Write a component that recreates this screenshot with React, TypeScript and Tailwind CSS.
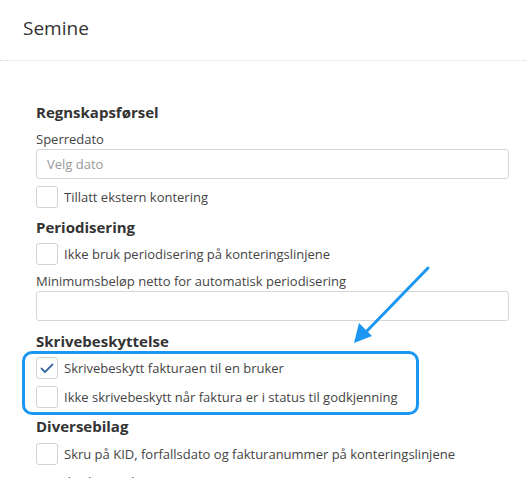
import React from 'react';

const font = { fontFamily: '"Open Sans", "Noto Sans", sans-serif' };

const Checkbox = ({ checked = false }: { checked?: boolean }) => (
  <span className="w-[22px] h-[22px] shrink-0 border border-[#d2d2d2] rounded-[3px] bg-white flex items-center justify-center">
    {checked && (
      <svg width="14" height="11" viewBox="0 0 14 11" fill="none">
        <path d="M1.5 5.5 L5 9 L12.5 1.5" stroke="#3d6aa3" strokeWidth="1.8" strokeLinecap="round" strokeLinejoin="round" />
      </svg>
    )}
  </span>
);

const CheckRow = ({ label, checked, className = '' }: { label: string; checked?: boolean; className?: string }) => (
  <label className={`flex items-center gap-[6px] h-[22px] ${className}`}>
    <Checkbox checked={checked} />
    <span className="text-[13px] leading-[18px] text-[#444]">{label}</span>
  </label>
);

const Heading = ({ children, className = '' }: { children: React.ReactNode; className?: string }) => (
  <h3 className={`text-[15px] leading-[20px] font-bold text-[#333] ${className}`}>{children}</h3>
);

const FieldLabel = ({ children, className = '' }: { children: React.ReactNode; className?: string }) => (
  <div className={`text-[13px] leading-[18px] text-[#444] ${className}`}>{children}</div>
);

const TextInput = ({ placeholder = '', className = '' }: { placeholder?: string; className?: string }) => (
  <input
    placeholder={placeholder}
    className={`block w-full h-[30px] border border-[#d6d6d6] rounded-[3px] px-[10px] text-[13px] text-[#444] placeholder:text-[#999] outline-none ${className}`}
    style={font}
  />
);

const App: React.FC = () => {
  return (
    <div className="relative w-[526px] h-[478px] overflow-hidden bg-white" style={font}>
      {/* Header */}
      <div className="h-[61px] pt-[16px] pl-[23px] border-b border-dotted border-[#d8d8d8]">
        <h2 className="text-[19px] leading-[24px] text-[#333]">Semine</h2>
      </div>

      <div className="pl-[36px] pr-[17px] pt-[41px]">
        <Heading>Regnskapsførsel</Heading>
        <FieldLabel className="mt-[8px]">Sperredato</FieldLabel>
        <TextInput placeholder="Velg dato" className="mt-[1px]" />
        <CheckRow label="Tillatt ekstern kontering" className="mt-[7px]" />

        <Heading className="mt-[9px]">Periodisering</Heading>
        <CheckRow label="Ikke bruk periodisering på konteringslinjene" className="mt-[6px]" />
        <FieldLabel className="mt-[7px]">Minimumsbeløp netto for automatisk periodisering</FieldLabel>
        <TextInput className="mt-[1px]" />

        <Heading className="mt-[10px]">Skrivebeskyttelse</Heading>
        <div className="relative mt-[6px]">
          <CheckRow label="Skrivebeskytt fakturaen til en bruker" checked />
          <CheckRow label="Ikke skrivebeskytt når faktura er i status til godkjenning" className="mt-[7px]" />
          {/* highlight annotation */}
          <div className="absolute top-[-6px] bottom-[-7px] left-[-14px] w-[397px] border-[3px] border-[#1b97f2] rounded-[10px] pointer-events-none" />
        </div>

        <Heading className="mt-[8px]">Diversebilag</Heading>
        <CheckRow label="Skru på KID, forfallsdato og fakturanummer på konteringslinjene" className="mt-[7px]" />
        <FieldLabel className="mt-[8px]">Standard periode</FieldLabel>
      </div>

      {/* arrow annotation */}
      <svg className="absolute left-0 top-0 pointer-events-none" width="526" height="478" viewBox="0 0 526 478">
        <line x1="428" y1="268" x2="364" y2="334" stroke="#1b97f2" strokeWidth="3" strokeLinecap="round" />
        <polygon points="354,343 359,323 372,336" fill="#1b97f2" />
      </svg>
    </div>
  );
};

export default App;
